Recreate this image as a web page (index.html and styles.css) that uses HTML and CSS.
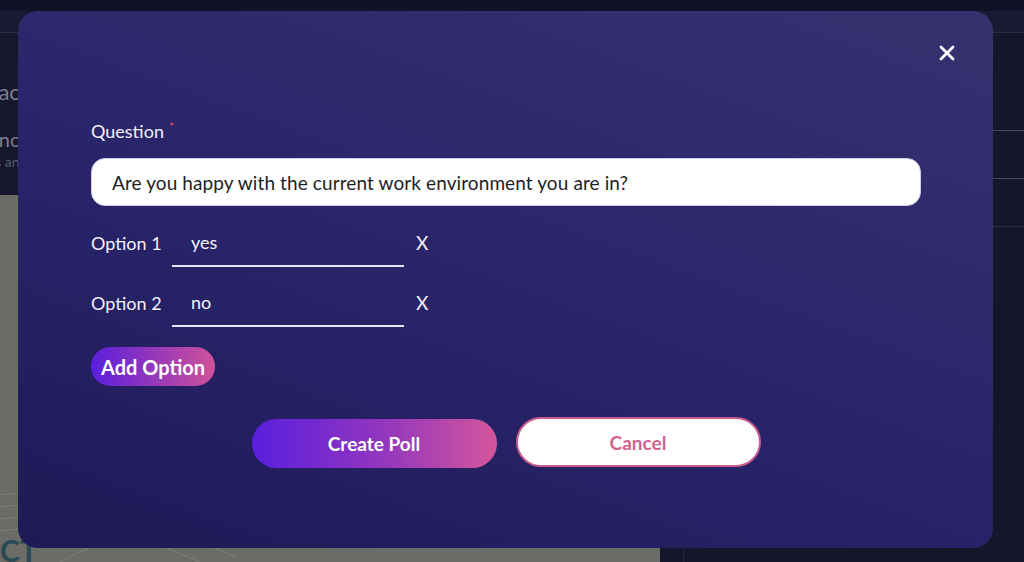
FILE: index.html
```html
<!DOCTYPE html>
<html lang="en">
<head>
    <meta charset="UTF-8">
    <meta name="viewport" content="width=device-width, initial-scale=1.0">
    <title>Create Poll</title>
    <link rel="stylesheet" href="styles.css">
</head>
<body>
    <div class="page">
        <div class="topbar"></div>
        <div class="subbar"></div>
        <div class="content">
            <div class="left-col">
                <div class="intro">
                    <p class="intro-title">Team space</p>
                    <p class="intro-text">Do you know your colleagues?</p>
                    <p class="intro-small">Manage polls and messages</p>
                </div>
                <div class="picture">
                    <svg width="660" height="367" viewBox="0 0 660 367">
                        <g fill="none" stroke="#7d7e7a" stroke-width="1">
                            <path d="M0 300 Q120 280 260 340"/>
                            <path d="M0 312 Q120 292 250 352"/>
                            <path d="M0 324 Q110 306 236 362"/>
                            <path d="M0 336 Q100 320 200 367"/>
                            <path d="M60 367 Q130 330 240 300"/>
                        </g>
                        <text x="0" y="367" font-family="Lato" font-size="30" font-weight="700" fill="#2a4a55">CT</text>
                    </svg>
                </div>
            </div>
            <div class="side-col">
                <div class="side-row"></div>
                <div class="side-row"></div>
                <div class="side-row"></div>
            </div>
        </div>
    </div>

    <div class="modal">
        <button class="close-btn" aria-label="Close">
            <svg width="16" height="16" viewBox="0 0 16 16">
                <path d="M2 2 L14 14 M14 2 L2 14" stroke="#fff" stroke-width="2.8" stroke-linecap="round"/>
            </svg>
        </button>

        <form class="poll-form">
            <label class="question-label" for="question">Question<sup class="required">*</sup></label>
            <input class="question-input" id="question" type="text" value="Are you happy with the current work environment you are in?">

            <div class="option-row">
                <label class="option-label">Option 1</label>
                <input class="option-input" type="text" value="yes">
                <span class="remove-option">X</span>
            </div>
            <div class="option-row">
                <label class="option-label">Option 2</label>
                <input class="option-input" type="text" value="no">
                <span class="remove-option">X</span>
            </div>

            <div class="add-row">
                <button type="button" class="add-btn">Add Option</button>
            </div>

            <div class="actions">
                <button type="button" class="create-btn">Create Poll</button>
                <button type="button" class="cancel-btn">Cancel</button>
            </div>
        </form>
    </div>
</body>
</html>
```

FILE: styles.css
```css
body {
    margin: 0;
    padding: 0;
    font-family: Lato, "Open Sans", sans-serif;
    background-color: #15152b;
    overflow: hidden;
}

.page {
    height: 562px;
    display: flex;
    flex-direction: column;
}

.topbar {
    height: 11px;
    background-color: #121226;
}

.subbar {
    height: 21px;
    background-color: #191933;
    border-bottom: 1px solid #2a2a44;
}

.content {
    flex: 1;
    display: flex;
}

.left-col {
    width: 660px;
    display: flex;
    flex-direction: column;
    background-color: #16162c;
}

.intro {
    height: 162px;
    color: #7e7e90;
    overflow: hidden;
}

.intro p {
    margin: 0;
    white-space: nowrap;
    margin-left: -80px;
}

.intro-title {
    font-size: 22px;
    padding-top: 45px;
}

.intro-text {
    font-size: 20px;
    padding-top: 22px;
}

.intro-small {
    font-size: 14px;
    color: #5c5c70;
    padding-top: 2px;
}

.picture {
    flex: 1;
    background-color: #6b6b67;
    overflow: hidden;
}

.picture svg {
    display: block;
}

.side-col {
    flex: 1;
    margin-left: 23px;
    border-left: 1px solid #24243c;
    padding-top: 97px;
}

.side-row {
    height: 47px;
    border-top: 1px solid #4a4a60;
}

.side-row:last-child {
    border-top-color: #2a2a40;
}

.modal {
    position: fixed;
    left: 18px;
    top: 11px;
    width: 975px;
    height: 537px;
    box-sizing: border-box;
    border-radius: 20px;
    background: linear-gradient(20deg, #1e1a56 0%, #29246a 45%, #38316f 100%);
    padding: 109px 72px 0 73px;
}

.close-btn {
    position: absolute;
    top: 30px;
    right: 34px;
    width: 24px;
    height: 24px;
    padding: 0;
    border: none;
    background: none;
    display: flex;
    align-items: center;
    justify-content: center;
    cursor: pointer;
}

.poll-form {
    display: flex;
    flex-direction: column;
}

.question-label {
    color: #f1f0f8;
    font-size: 18px;
    line-height: 22px;
    margin-bottom: 16px;
}

.required {
    color: #e0506a;
    font-size: 12px;
    line-height: 0;
    margin-left: 5px;
}

.question-input {
    height: 48px;
    box-sizing: border-box;
    border: 1px solid #cfcbe6;
    border-radius: 14px;
    background-color: #fff;
    padding: 0 20px;
    font-family: inherit;
    font-size: 19px;
    letter-spacing: 0.1px;
    color: #1e1e24;
    outline: none;
    margin-bottom: 19px;
}

.option-row {
    display: flex;
    align-items: flex-start;
    height: 42px;
    margin-bottom: 18px;
}

.option-label {
    color: #f1f0f8;
    font-size: 18px;
    line-height: 36px;
    width: 81px;
}

.option-input {
    width: 232px;
    height: 42px;
    box-sizing: border-box;
    border: none;
    border-bottom: 2px solid #e8e6f2;
    background: transparent;
    padding: 0 19px 6px;
    font-family: inherit;
    font-size: 18px;
    color: #f4f4fa;
    outline: none;
}

.remove-option {
    color: #f1f0f8;
    font-size: 19px;
    line-height: 36px;
    margin-left: 12px;
}

.add-row {
    display: flex;
    margin-top: 2px;
}

.add-btn {
    height: 39px;
    padding: 0 10px;
    border: none;
    border-radius: 20px;
    background: linear-gradient(90deg, #5a1fdc 0%, #9a3ab8 55%, #cf5297 100%);
    color: #fff;
    font-family: inherit;
    font-size: 20px;
    font-weight: 700;
    cursor: pointer;
}

.actions {
    display: flex;
    justify-content: center;
    align-items: flex-start;
    gap: 19px;
    margin-top: 31px;
}

.create-btn,
.cancel-btn {
    width: 245px;
    border-radius: 25px;
    font-family: inherit;
    font-size: 19px;
    font-weight: 700;
    cursor: pointer;
}

.create-btn {
    height: 49px;
    border: none;
    background: linear-gradient(90deg, #5a1edf 0%, #9437bd 55%, #d4569a 100%);
    color: #fff;
    margin-top: 2px;
}

.cancel-btn {
    height: 50px;
    border: 2px solid #c85a8c;
    background-color: #fff;
    color: #d2628e;
}
```
